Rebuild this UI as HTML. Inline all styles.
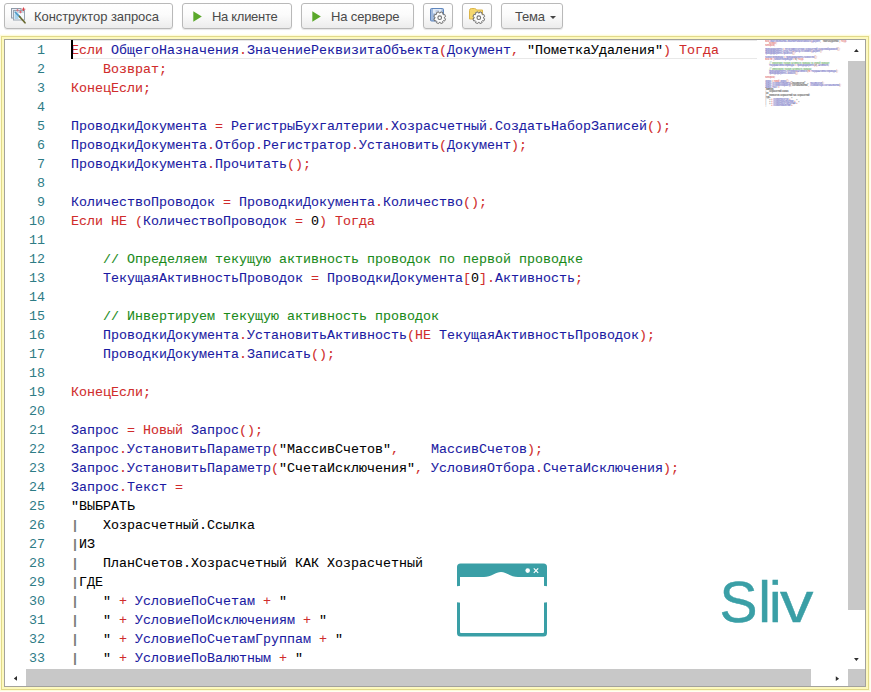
<!DOCTYPE html>
<html lang="ru">
<head>
<meta charset="utf-8">
<title>Консоль кода</title>
<style>
html,body{margin:0;padding:0;}
body{width:871px;height:692px;overflow:hidden;background:#fff;position:relative;font-family:"Liberation Sans",sans-serif;}
.btn{position:absolute;top:3px;height:26px;box-sizing:border-box;border:1px solid #b9b9b9;border-radius:3px;
  background:linear-gradient(#ffffff 0%,#fbfbfb 45%,#ececec 100%);box-shadow:0 1px 1px rgba(0,0,0,.10);
  font-size:13px;color:#4a4a4a;line-height:25px;white-space:nowrap;}
.btn span{position:absolute;top:0;}
.play{position:absolute;top:0;}
#outer{position:absolute;left:1px;top:36px;width:868px;height:654px;box-sizing:border-box;background:#fdf9be;border:1px solid #e1d98a;box-shadow:0 0 0 1px #fefbda,0 0 0 2px #fffef2;}
#frame{position:absolute;left:4px;top:39px;width:862px;height:648px;box-sizing:border-box;border:1px solid #a3a29d;background:#fff;}
#ed{position:absolute;left:5px;top:40px;width:860px;height:646px;background:#fff;overflow:hidden;}
.mono{font-family:"Liberation Mono","DejaVu Sans Mono",monospace;font-size:13.333px;line-height:19px;}
#nums{position:absolute;left:0;top:1px;width:40px;text-align:right;color:#2d7c86;}
#code{position:absolute;left:66px;top:1px;color:#000;-webkit-text-stroke:0.08px;}
.l{height:19px;white-space:pre;}
.k,.o{color:#d02c2c;}
.i{color:#1a1aa2;}
.s,.n{color:#000;}
.c{color:#1a8a1a;}
.p{color:#7a7a7a;font-weight:bold;}
#curline{position:absolute;left:66px;top:0;width:686px;height:19px;box-sizing:border-box;border-top:1px solid #e8e8e8;border-bottom:1px solid #e8e8e8;}
#cursor{position:absolute;left:66px;top:0;width:2px;height:19px;background:#000;}
#mini{position:absolute;left:760px;top:0;width:83px;height:90px;overflow:hidden;opacity:.5;}
#mini .in{position:absolute;left:0;top:0;transform:scale(0.125);transform-origin:0 0;font-family:"Liberation Mono",monospace;font-size:22px;letter-spacing:-5.2px;line-height:16px;font-weight:bold;}
#mini .l{height:16px;}
#vs{position:absolute;left:843px;top:0;width:17px;height:629px;background:#fff;}
#vs .th{position:absolute;left:0;top:21px;width:17px;height:549px;background:#c8c8c8;}
#hs{position:absolute;left:0;top:629px;width:843px;height:17px;background:#fff;}
#hs .th{position:absolute;left:21px;top:0;width:785px;height:17px;background:#c8c8c8;}
#corner{position:absolute;left:843px;top:629px;width:17px;height:17px;background:#c8c8c8;}
.arr{position:absolute;width:0;height:0;}
</style>
</head>
<body>
<div class="btn" style="left:4px;width:169px;">
  <svg style="position:absolute;left:0;top:0" width="30" height="24" viewBox="5 4 30 24">
    <rect x="11.500" y="8.500" width="9.500" height="9.500" fill="#e6edf5" stroke="#8f9aa8" stroke-width="1"/>
    <rect x="13.500" y="10.500" width="11" height="9.500" fill="#f6f9fc" stroke="#98a3b0" stroke-width="1"/>
    <rect x="14" y="11" width="10" height="2" fill="#c9d6e4"/>
    <rect x="14.500" y="13.500" width="4" height="5.500" fill="#a9d3ec"/>
    <path d="M15.500 12.500L20 17" stroke="#4a9ac8" stroke-width="1.700" stroke-linecap="round"/>
    <path d="M19.500 16.500L25 22.800" stroke="#6a6a30" stroke-width="1.700" stroke-linecap="round"/>
    <path d="M23.500 7.500v3.500M21.800 9.200h3.500" stroke="#d8434a" stroke-width="1"/>
    <path d="M20.500 10.700v2.600M19.200 12h2.600" stroke="#e0606a" stroke-width="0.900"/>
    <path d="M17.500 9v2.400M16.300 10.200h2.400" stroke="#e0707a" stroke-width="0.800"/>
  </svg>
  <span style="left:29px;letter-spacing:-0.07px">Конструктор запроса</span>
</div>
<div class="btn" style="left:182px;width:110px;"><svg class="play" style="left:10px" width="10" height="24" viewBox="0 0 10 24"><path d="M0.300 7.300L8.800 12.500L0.300 17.700z" fill="#5aa82a"/></svg><span style="left:29px;letter-spacing:-0.3px">На клиенте</span></div>
<div class="btn" style="left:301px;width:113px;"><svg class="play" style="left:10px" width="10" height="24" viewBox="0 0 10 24"><path d="M0.300 7.300L8.800 12.500L0.300 17.700z" fill="#5aa82a"/></svg><span style="left:29px;letter-spacing:-0.12px">На сервере</span></div>
<div class="btn" style="left:423px;width:30px;">
  <svg style="position:absolute;left:0;top:0" width="28" height="24" viewBox="424 4 28 24">
    <rect x="430.500" y="8.500" width="13" height="12.500" rx="1" fill="#9fb8dd" stroke="#5f86bd" stroke-width="1"/>
    <rect x="433" y="9" width="8.500" height="4.500" fill="#e3ebf6"/>
    <rect x="435.500" y="10.500" width="3.500" height="1" fill="#9db4d6"/>
    <path d="M444.37 18.22 L445.59 18.82 L444.66 21.07 L443.37 20.64 L442.64 21.37 L443.07 22.66 L440.82 23.59 L440.22 22.37 L439.18 22.37 L438.58 23.59 L436.33 22.66 L436.76 21.37 L436.03 20.64 L434.74 21.07 L433.81 18.82 L435.03 18.22 L435.03 17.18 L433.81 16.58 L434.74 14.33 L436.03 14.76 L436.76 14.03 L436.33 12.74 L438.58 11.81 L439.18 13.03 L440.22 13.03 L440.82 11.81 L443.07 12.74 L442.64 14.03 L443.37 14.76 L444.66 14.33 L445.59 16.58 L444.37 17.18Z" fill="#fbfbfb" stroke="#727272" stroke-width="1" stroke-linejoin="round"/>
    <circle cx="439.700" cy="17.700" r="1.800" fill="#fff" stroke="#727272" stroke-width="1.100"/>
  </svg>
</div>
<div class="btn" style="left:462px;width:30px;">
  <svg style="position:absolute;left:0;top:0" width="28" height="24" viewBox="463 4 28 24">
    <path d="M469.500 10.500 q0-2 2-2 h3 q1.500 0 2 1.500 h6 v9 h-13z" fill="#f5d76e" stroke="#dcb548" stroke-width="1" stroke-linejoin="round"/>
    <path d="M483.47 18.22 L484.69 18.82 L483.76 21.07 L482.47 20.64 L481.74 21.37 L482.17 22.66 L479.92 23.59 L479.32 22.37 L478.28 22.37 L477.68 23.59 L475.43 22.66 L475.86 21.37 L475.13 20.64 L473.84 21.07 L472.91 18.82 L474.13 18.22 L474.13 17.18 L472.91 16.58 L473.84 14.33 L475.13 14.76 L475.86 14.03 L475.43 12.74 L477.68 11.81 L478.28 13.03 L479.32 13.03 L479.92 11.81 L482.17 12.74 L481.74 14.03 L482.47 14.76 L483.76 14.33 L484.69 16.58 L483.47 17.18Z" fill="#fbfbfb" stroke="#727272" stroke-width="1" stroke-linejoin="round"/>
    <circle cx="478.800" cy="17.700" r="1.800" fill="#fff" stroke="#727272" stroke-width="1.100"/>
  </svg>
</div>
<div class="btn" style="left:501px;width:62px;"><span style="left:13px;letter-spacing:-0.2px">Тема</span>
  <i class="arr" style="left:48px;top:12px;border-top:3px solid #444;border-left:3px solid transparent;border-right:3px solid transparent;"></i>
</div>

<div id="outer"></div>
<div id="frame"></div>
<div id="ed">
  <div id="curline"></div>
  <div id="nums" class="mono">
<div class="l">1</div>
<div class="l">2</div>
<div class="l">3</div>
<div class="l">4</div>
<div class="l">5</div>
<div class="l">6</div>
<div class="l">7</div>
<div class="l">8</div>
<div class="l">9</div>
<div class="l">10</div>
<div class="l">11</div>
<div class="l">12</div>
<div class="l">13</div>
<div class="l">14</div>
<div class="l">15</div>
<div class="l">16</div>
<div class="l">17</div>
<div class="l">18</div>
<div class="l">19</div>
<div class="l">20</div>
<div class="l">21</div>
<div class="l">22</div>
<div class="l">23</div>
<div class="l">24</div>
<div class="l">25</div>
<div class="l">26</div>
<div class="l">27</div>
<div class="l">28</div>
<div class="l">29</div>
<div class="l">30</div>
<div class="l">31</div>
<div class="l">32</div>
<div class="l">33</div>
  </div>
  <div id="code" class="mono">
<div class="l"><span class="k">Если</span> <span class="i">ОбщегоНазначения</span><span class="o">.</span><span class="i">ЗначениеРеквизитаОбъекта</span><span class="o">(</span><span class="i">Документ</span><span class="o">,</span> <span class="s">"ПометкаУдаления"</span><span class="o">)</span> <span class="k">Тогда</span></div>
<div class="l">    <span class="k">Возврат</span><span class="o">;</span></div>
<div class="l"><span class="k">КонецЕсли</span><span class="o">;</span></div>
<div class="l">&nbsp;</div>
<div class="l"><span class="i">ПроводкиДокумента</span> <span class="o">=</span> <span class="i">РегистрыБухгалтерии</span><span class="o">.</span><span class="i">Хозрасчетный</span><span class="o">.</span><span class="i">СоздатьНаборЗаписей</span><span class="o">(</span><span class="o">)</span><span class="o">;</span></div>
<div class="l"><span class="i">ПроводкиДокумента</span><span class="o">.</span><span class="i">Отбор</span><span class="o">.</span><span class="i">Регистратор</span><span class="o">.</span><span class="i">Установить</span><span class="o">(</span><span class="i">Документ</span><span class="o">)</span><span class="o">;</span></div>
<div class="l"><span class="i">ПроводкиДокумента</span><span class="o">.</span><span class="i">Прочитать</span><span class="o">(</span><span class="o">)</span><span class="o">;</span></div>
<div class="l">&nbsp;</div>
<div class="l"><span class="i">КоличествоПроводок</span> <span class="o">=</span> <span class="i">ПроводкиДокумента</span><span class="o">.</span><span class="i">Количество</span><span class="o">(</span><span class="o">)</span><span class="o">;</span></div>
<div class="l"><span class="k">Если</span> <span class="k">НЕ</span> <span class="o">(</span><span class="i">КоличествоПроводок</span> <span class="o">=</span> <span class="n">0</span><span class="o">)</span> <span class="k">Тогда</span></div>
<div class="l">&nbsp;</div>
<div class="l">    <span class="c">// Определяем текущую активность проводок по первой проводке</span></div>
<div class="l">    <span class="i">ТекущаяАктивностьПроводок</span> <span class="o">=</span> <span class="i">ПроводкиДокумента</span><span class="o">[</span><span class="n">0</span><span class="o">]</span><span class="o">.</span><span class="i">Активность</span><span class="o">;</span></div>
<div class="l">&nbsp;</div>
<div class="l">    <span class="c">// Инвертируем текущую активность проводок</span></div>
<div class="l">    <span class="i">ПроводкиДокумента</span><span class="o">.</span><span class="i">УстановитьАктивность</span><span class="o">(</span><span class="k">НЕ</span> <span class="i">ТекущаяАктивностьПроводок</span><span class="o">)</span><span class="o">;</span></div>
<div class="l">    <span class="i">ПроводкиДокумента</span><span class="o">.</span><span class="i">Записать</span><span class="o">(</span><span class="o">)</span><span class="o">;</span></div>
<div class="l">&nbsp;</div>
<div class="l"><span class="k">КонецЕсли</span><span class="o">;</span></div>
<div class="l">&nbsp;</div>
<div class="l"><span class="i">Запрос</span> <span class="o">=</span> <span class="k">Новый</span> <span class="i">Запрос</span><span class="o">(</span><span class="o">)</span><span class="o">;</span></div>
<div class="l"><span class="i">Запрос</span><span class="o">.</span><span class="i">УстановитьПараметр</span><span class="o">(</span><span class="s">"МассивСчетов"</span><span class="o">,</span>    <span class="i">МассивСчетов</span><span class="o">)</span><span class="o">;</span></div>
<div class="l"><span class="i">Запрос</span><span class="o">.</span><span class="i">УстановитьПараметр</span><span class="o">(</span><span class="s">"СчетаИсключения"</span><span class="o">,</span> <span class="i">УсловияОтбора</span><span class="o">.</span><span class="i">СчетаИсключения</span><span class="o">)</span><span class="o">;</span></div>
<div class="l"><span class="i">Запрос</span><span class="o">.</span><span class="i">Текст</span> <span class="o">=</span></div>
<div class="l"><span class="s">"ВЫБРАТЬ</span></div>
<div class="l"><span class="p">|</span><span class="s">   Хозрасчетный.Ссылка</span></div>
<div class="l"><span class="p">|</span><span class="s">ИЗ</span></div>
<div class="l"><span class="p">|</span><span class="s">   ПланСчетов.Хозрасчетный КАК Хозрасчетный</span></div>
<div class="l"><span class="p">|</span><span class="s">ГДЕ</span></div>
<div class="l"><span class="p">|</span><span class="s">   "</span> <span class="o">+</span> <span class="i">УсловиеПоСчетам</span> <span class="o">+</span> <span class="s">"</span></div>
<div class="l"><span class="p">|</span><span class="s">   "</span> <span class="o">+</span> <span class="i">УсловиеПоИсключениям</span> <span class="o">+</span> <span class="s">"</span></div>
<div class="l"><span class="p">|</span><span class="s">   "</span> <span class="o">+</span> <span class="i">УсловиеПоСчетамГруппам</span> <span class="o">+</span> <span class="s">"</span></div>
<div class="l"><span class="p">|</span><span class="s">   "</span> <span class="o">+</span> <span class="i">УсловиеПоВалютным</span> <span class="o">+</span> <span class="s">"</span></div>
  </div>
  <div id="cursor"></div>

  <!-- watermark -->
  <svg style="position:absolute;left:440px;top:515px" width="110" height="90" viewBox="445 555 110 90">
    <path d="M457 567 q0-3.500 3.500-3.500 h83 q3.500 0 3.500 3.500 v66 q0 3.500-3.500 3.500 h-83 q-3.500 0-3.500-3.500z" fill="#3a9fa6"/>
    <path d="M460 577 h24 C491 577 496 572 501 572 C506 572 511 577 518 577 h26 v55 q0 1-1 1 h-82 q-1 0-1-1z" fill="#fff"/>
    <ellipse cx="502" cy="594.300" rx="70" ry="10.600" fill="#fff"/>
    <circle cx="527.700" cy="570.600" r="2.300" fill="#fff"/>
    <path d="M533.800 568.400l4.400 4.400M538.200 568.400l-4.400 4.400" stroke="#fff" stroke-width="1.200"/>
  </svg>
  <svg style="position:absolute;left:705px;top:525px" width="130" height="80" viewBox="710 565 130 80">
    <text y="621.500" font-family="Liberation Sans, sans-serif" font-size="57" fill="#3a9fa6" stroke="#3a9fa6" stroke-width="0.400"><tspan x="719.500">S</tspan><tspan x="758.300">l</tspan><tspan x="768.900">i</tspan><tspan x="780" textLength="33.400" lengthAdjust="spacingAndGlyphs">v</tspan></text>
  </svg>

  <div id="mini"><div class="in">
<div class="l"><span class="k">Если</span> <span class="i">ОбщегоНазначения</span><span class="o">.</span><span class="i">ЗначениеРеквизитаОбъекта</span><span class="o">(</span><span class="i">Документ</span><span class="o">,</span> <span class="s">"ПометкаУдаления"</span><span class="o">)</span> <span class="k">Тогда</span></div>
<div class="l">    <span class="k">Возврат</span><span class="o">;</span></div>
<div class="l"><span class="k">КонецЕсли</span><span class="o">;</span></div>
<div class="l">&nbsp;</div>
<div class="l"><span class="i">ПроводкиДокумента</span> <span class="o">=</span> <span class="i">РегистрыБухгалтерии</span><span class="o">.</span><span class="i">Хозрасчетный</span><span class="o">.</span><span class="i">СоздатьНаборЗаписей</span><span class="o">(</span><span class="o">)</span><span class="o">;</span></div>
<div class="l"><span class="i">ПроводкиДокумента</span><span class="o">.</span><span class="i">Отбор</span><span class="o">.</span><span class="i">Регистратор</span><span class="o">.</span><span class="i">Установить</span><span class="o">(</span><span class="i">Документ</span><span class="o">)</span><span class="o">;</span></div>
<div class="l"><span class="i">ПроводкиДокумента</span><span class="o">.</span><span class="i">Прочитать</span><span class="o">(</span><span class="o">)</span><span class="o">;</span></div>
<div class="l">&nbsp;</div>
<div class="l"><span class="i">КоличествоПроводок</span> <span class="o">=</span> <span class="i">ПроводкиДокумента</span><span class="o">.</span><span class="i">Количество</span><span class="o">(</span><span class="o">)</span><span class="o">;</span></div>
<div class="l"><span class="k">Если</span> <span class="k">НЕ</span> <span class="o">(</span><span class="i">КоличествоПроводок</span> <span class="o">=</span> <span class="n">0</span><span class="o">)</span> <span class="k">Тогда</span></div>
<div class="l">&nbsp;</div>
<div class="l">    <span class="c">// Определяем текущую активность проводок по первой проводке</span></div>
<div class="l">    <span class="i">ТекущаяАктивностьПроводок</span> <span class="o">=</span> <span class="i">ПроводкиДокумента</span><span class="o">[</span><span class="n">0</span><span class="o">]</span><span class="o">.</span><span class="i">Активность</span><span class="o">;</span></div>
<div class="l">&nbsp;</div>
<div class="l">    <span class="c">// Инвертируем текущую активность проводок</span></div>
<div class="l">    <span class="i">ПроводкиДокумента</span><span class="o">.</span><span class="i">УстановитьАктивность</span><span class="o">(</span><span class="k">НЕ</span> <span class="i">ТекущаяАктивностьПроводок</span><span class="o">)</span><span class="o">;</span></div>
<div class="l">    <span class="i">ПроводкиДокумента</span><span class="o">.</span><span class="i">Записать</span><span class="o">(</span><span class="o">)</span><span class="o">;</span></div>
<div class="l">&nbsp;</div>
<div class="l"><span class="k">КонецЕсли</span><span class="o">;</span></div>
<div class="l">&nbsp;</div>
<div class="l"><span class="i">Запрос</span> <span class="o">=</span> <span class="k">Новый</span> <span class="i">Запрос</span><span class="o">(</span><span class="o">)</span><span class="o">;</span></div>
<div class="l"><span class="i">Запрос</span><span class="o">.</span><span class="i">УстановитьПараметр</span><span class="o">(</span><span class="s">"МассивСчетов"</span><span class="o">,</span>    <span class="i">МассивСчетов</span><span class="o">)</span><span class="o">;</span></div>
<div class="l"><span class="i">Запрос</span><span class="o">.</span><span class="i">УстановитьПараметр</span><span class="o">(</span><span class="s">"СчетаИсключения"</span><span class="o">,</span> <span class="i">УсловияОтбора</span><span class="o">.</span><span class="i">СчетаИсключения</span><span class="o">)</span><span class="o">;</span></div>
<div class="l"><span class="i">Запрос</span><span class="o">.</span><span class="i">Текст</span> <span class="o">=</span></div>
<div class="l"><span class="s">"ВЫБРАТЬ</span></div>
<div class="l"><span class="p">|</span><span class="s">   Хозрасчетный.Ссылка</span></div>
<div class="l"><span class="p">|</span><span class="s">ИЗ</span></div>
<div class="l"><span class="p">|</span><span class="s">   ПланСчетов.Хозрасчетный КАК Хозрасчетный</span></div>
<div class="l"><span class="p">|</span><span class="s">ГДЕ</span></div>
<div class="l"><span class="p">|</span><span class="s">   "</span> <span class="o">+</span> <span class="i">УсловиеПоСчетам</span> <span class="o">+</span> <span class="s">"</span></div>
<div class="l"><span class="p">|</span><span class="s">   "</span> <span class="o">+</span> <span class="i">УсловиеПоИсключениям</span> <span class="o">+</span> <span class="s">"</span></div>
<div class="l"><span class="p">|</span><span class="s">   "</span> <span class="o">+</span> <span class="i">УсловиеПоСчетамГруппам</span> <span class="o">+</span> <span class="s">"</span></div>
<div class="l"><span class="p">|</span><span class="s">   "</span> <span class="o">+</span> <span class="i">УсловиеПоВалютным</span> <span class="o">+</span> <span class="s">"</span></div>
  </div></div>
  <div id="vs"><div class="th"></div>
    <svg style="position:absolute;left:0;top:0" width="17" height="629" viewBox="0 0 17 629"><path d="M6 11.900h4.800L8.400 9z M6 618h4.800L8.400 620.900z" fill="#2e2e2e"/></svg>
  </div>
  <div id="hs"><div class="th"></div>
    <svg style="position:absolute;left:0;top:0" width="843" height="17" viewBox="0 0 843 17"><path d="M12 7.100v4.600L8.800 9.400z M830.800 7.300v4.800L834.100 9.700z" fill="#2e2e2e"/></svg>
  </div>
  <div id="corner"></div>
</div>
</body>
</html>
